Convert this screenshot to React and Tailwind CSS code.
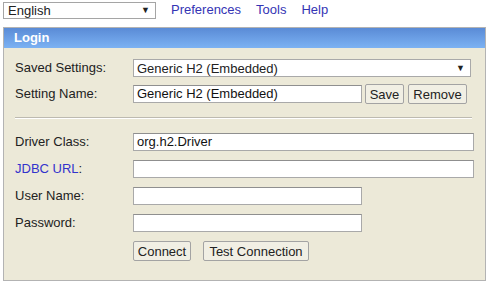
import React from 'react';

function Field({ width, value }) {
  return (
    <div className={`${width} h-[18px] bg-white border border-[#a9a9a9] border-t-[#8f8f8f] pl-[3px] leading-[16px] text-[#111] overflow-hidden whitespace-nowrap`}>
      {value}
    </div>
  );
}

function Btn({ children, width }) {
  return (
    <div className={`${width} h-[20px] border border-[#a3a3a3] rounded-[2px] bg-[#f1efe4] flex items-center justify-center text-[#222] leading-none`}>
      {children}
    </div>
  );
}

function Row({ label, children, mt }) {
  return (
    <div className={`flex items-center leading-[18px] ${mt}`}>
      <div className="w-[118px] text-[#222]">{label}</div>
      {children}
    </div>
  );
}

export default function App() {
  return (
    <div className="w-[489px] h-[285px] bg-white font-['Liberation_Sans',Arial,sans-serif] text-[13px] text-[#222] overflow-hidden">
      {/* top bar */}
      <div className="flex items-center pt-[1px] pl-[3px] h-[19px]">
        <div className="w-[153px] h-[17px] border border-[#a5a5a5] bg-white flex items-center justify-between pl-[4px] pr-[5px]">
          <span className="leading-none">English</span>
          <span className="text-[9px] leading-none">▼</span>
        </div>
        <div className="flex gap-[15px] ml-[15px] text-[#3434b4]">
          <span>Preferences</span>
          <span>Tools</span>
          <span>Help</span>
        </div>
      </div>

      {/* login panel */}
      <div className="mt-[8px] ml-[3px] w-[483px] h-[254px] border border-[#b3b3b3] bg-[#ece9d8]">
        <div className="h-[20px] bg-gradient-to-b from-[#5a8bd6] to-[#7cb2f3] text-white font-bold pl-[10px] leading-[20px]">
          Login
        </div>
        <div className="pl-[11px] pt-[11px]">
          <Row label="Saved Settings:">
            <div className="w-[338px] h-[18px] bg-white border border-[#a9a9a9] flex items-center justify-between pl-[3px] pr-[5px]">
              <span className="leading-none">Generic H2 (Embedded)</span>
              <span className="text-[9px] leading-none">▼</span>
            </div>
          </Row>
          <Row label="Setting Name:" mt="mt-[7px]">
            <Field width="w-[229px]" value="Generic H2 (Embedded)" />
            <div className="ml-[3px]"><Btn width="w-[39px]">Save</Btn></div>
            <div className="ml-[4px]"><Btn width="w-[59px]">Remove</Btn></div>
          </Row>
          <div className="mt-[13px] w-[457px] border-t border-[#bdbab0] border-b border-b-white"></div>
          <Row label="Driver Class:" mt="mt-[14px]">
            <Field width="w-[341px]" value="org.h2.Driver" />
          </Row>
          <Row
            label={<><span className="text-[#3333cc]">JDBC URL</span>:</>}
            mt="mt-[9px]"
          >
            <Field width="w-[341px]" value="" />
          </Row>
          <Row label="User Name:" mt="mt-[9px]">
            <Field width="w-[229px]" value="" />
          </Row>
          <Row label="Password:" mt="mt-[9px]">
            <Field width="w-[229px]" value="" />
          </Row>
          <div className="flex mt-[9px] ml-[118px] gap-[12px]">
            <Btn width="w-[58px]">Connect</Btn>
            <Btn width="w-[106px]">Test Connection</Btn>
          </div>
        </div>
      </div>
    </div>
  );
}
